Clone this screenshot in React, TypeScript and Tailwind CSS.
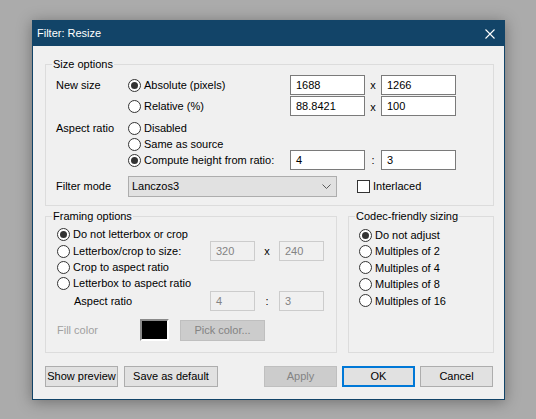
import React from "react";
import clsx from "clsx";

const Radio = ({ checked, label }: { checked?: boolean; label: string }) => (
  <label className="flex items-center gap-[3px] whitespace-nowrap">
    <span className="flex h-[13px] w-[13px] shrink-0 items-center justify-center rounded-full border border-[#333333] bg-white">
      {checked && <span className="h-[7px] w-[7px] rounded-full bg-[#333333]" />}
    </span>
    <span>{label}</span>
  </label>
);

const Field = ({
  value,
  className,
  disabled,
}: {
  value: string;
  className: string;
  disabled?: boolean;
}) => (
  <div
    className={clsx(
      "flex h-[20px] items-center border pl-[5px]",
      disabled ? "border-[#cccccc] bg-[#f0f0f0] text-[#838383]" : "border-[#7a7a7a] bg-white",
      className
    )}
  >
    {value}
  </div>
);

const Button = ({
  label,
  className,
  disabled,
  primary,
}: {
  label: string;
  className: string;
  disabled?: boolean;
  primary?: boolean;
}) => (
  <button
    className={clsx(
      "flex h-[21px] items-center justify-center whitespace-nowrap",
      disabled
        ? "border border-[#bfbfbf] bg-[#cccccc] text-[#838383]"
        : primary
          ? "border-2 border-[#0078d7] bg-[#e1e1e1]"
          : "border border-[#adadad] bg-[#e1e1e1]",
      className
    )}
  >
    {label}
  </button>
);

export default function App() {
  return (
    <div className="h-[419px] w-[536px] overflow-hidden bg-[#ababab] pl-[32px] pt-[20px] font-[Liberation_Sans,Arial,sans-serif] text-[11px] text-black">
      <div className="flex h-[380px] w-[473px] flex-col border border-[#124468] bg-[#f0f0f0] shadow-[0_2px_14px_rgba(0,0,0,0.35)]">
        {/* title bar */}
        <div className="flex h-[25px] shrink-0 items-center justify-between bg-[#124468] pl-[4px] pr-[9px] text-white">
          <span className="text-[11px]">Filter: Resize</span>
          <svg width="10" height="10" viewBox="0 0 10 10" className="mt-[1px]">
            <path d="M0.5 0.5L9.5 9.5M9.5 0.5L0.5 9.5" stroke="white" strokeWidth="1.1" />
          </svg>
        </div>

        <div className="flex flex-col pl-[12px] pr-[10px]">
          {/* size options */}
          <fieldset className="mt-[11px] h-[149px] w-[449px] border border-[#dcdcdc] pl-[6px] pt-[4px]">
            <legend className="px-[1px] leading-[14px]">Size options</legend>
            <div className="ml-[4px] flex flex-col">
              <div className="flex h-[20px] items-center">
                <span className="w-[72px]">New size</span>
                <div className="w-[162px]">
                  <Radio checked label="Absolute (pixels)" />
                </div>
                <Field value="1688" className="w-[75px]" />
                <span className="w-[16px] text-center">x</span>
                <Field value="1266" className="w-[75px]" />
              </div>
              <div className="mt-[1px] flex h-[20px] items-center">
                <span className="w-[72px]" />
                <div className="w-[162px]">
                  <Radio label="Relative (%)" />
                </div>
                <Field value="88.8421" className="w-[75px]" />
                <span className="w-[16px] pt-[2px] text-center">x</span>
                <Field value="100" className="w-[75px]" />
              </div>
              <div className="mt-[4px] flex h-[16px] items-center">
                <span className="w-[72px]">Aspect ratio</span>
                <Radio label="Disabled" />
              </div>
              <div className="flex h-[16px] items-center">
                <span className="w-[72px]" />
                <Radio label="Same as source" />
              </div>
              <div className="mt-[-2px] flex h-[20px] items-center">
                <span className="w-[72px]" />
                <div className="w-[162px]">
                  <Radio checked label="Compute height from ratio:" />
                </div>
                <Field value="4" className="w-[75px]" />
                <span className="w-[16px] text-center">:</span>
                <Field value="3" className="w-[75px]" />
              </div>
              <div className="mt-[6px] flex h-[21px] items-center">
                <span className="w-[72px]">Filter mode</span>
                <div className="flex h-[21px] w-[209px] items-center justify-between border border-[#adadad] bg-[#e1e1e1] pl-[3px] pr-[5px]">
                  <span>Lanczos3</span>
                  <svg width="9" height="5" viewBox="0 0 9 5">
                    <path d="M0.5 0.5L4.5 4.5L8.5 0.5" fill="none" stroke="#5a5a5a" strokeWidth="1" />
                  </svg>
                </div>
                <label className="ml-[20px] flex items-center gap-[3px]">
                  <span className="h-[13px] w-[13px] border border-[#333333] bg-white" />
                  <span>Interlaced</span>
                </label>
              </div>
            </div>
          </fieldset>

          <div className="mt-[3px] flex">
            {/* framing options */}
            <fieldset className="h-[144px] w-[292px] border border-[#dcdcdc] pl-[6px] pt-[3px]">
              <legend className="px-[1px] leading-[14px]">Framing options</legend>
              <div className="ml-[5px] flex flex-col">
                <div className="flex h-[16px] items-center">
                  <Radio checked label="Do not letterbox or crop" />
                </div>
                <div className="mt-[-1px] flex h-[20px] items-center">
                  <div className="w-[153px]">
                    <Radio label="Letterbox/crop to size:" />
                  </div>
                  <Field value="320" disabled className="w-[45px]" />
                  <span className="w-[24px] text-center">x</span>
                  <Field value="240" disabled className="w-[45px]" />
                </div>
                <div className="mt-[-2px] flex h-[16px] items-center">
                  <Radio label="Crop to aspect ratio" />
                </div>
                <div className="flex h-[16px] items-center">
                  <Radio label="Letterbox to aspect ratio" />
                </div>
                <div className="flex h-[20px] items-center">
                  <span className="w-[153px] pl-[17px]">Aspect ratio</span>
                  <Field value="4" disabled className="w-[45px]" />
                  <span className="w-[24px] text-center">:</span>
                  <Field value="3" disabled className="w-[45px]" />
                </div>
                <div className="mt-[8px] flex h-[22px] items-center">
                  <span className="w-[83px] text-[#a0a0a0]">Fill color</span>
                  <div className="h-[22px] w-[29px] border-2 border-b-white border-l-[#8a8a8a] border-r-white border-t-[#8a8a8a] bg-black" />
                  <Button label="Pick color..." disabled className="ml-[11px] w-[85px]" />
                </div>
              </div>
            </fieldset>

            {/* codec-friendly sizing */}
            <fieldset className="ml-[11px] h-[144px] w-[146px] border border-[#dcdcdc] pl-[6px] pt-[4px]">
              <legend className="px-[1px] leading-[14px]">Codec-friendly sizing</legend>
              <div className="ml-[4px] flex flex-col">
                {["Do not adjust", "Multiples of 2", "Multiples of 4", "Multiples of 8", "Multiples of 16"].map(
                  (l, i) => (
                    <div key={l} className="flex h-[16.4px] items-center">
                      <Radio checked={i === 0} label={l} />
                    </div>
                  )
                )}
              </div>
            </fieldset>
          </div>

          {/* buttons */}
          <div className="mt-[13px] flex">
            <Button label="Show preview" className="w-[73px]" />
            <Button label="Save as default" className="ml-[6px] w-[94px]" />
            <Button label="Apply" disabled className="ml-[46px] w-[73px]" />
            <Button label="OK" primary className="ml-[5px] w-[73px]" />
            <Button label="Cancel" className="ml-[5px] w-[73px]" />
          </div>
        </div>
      </div>
    </div>
  );
}
